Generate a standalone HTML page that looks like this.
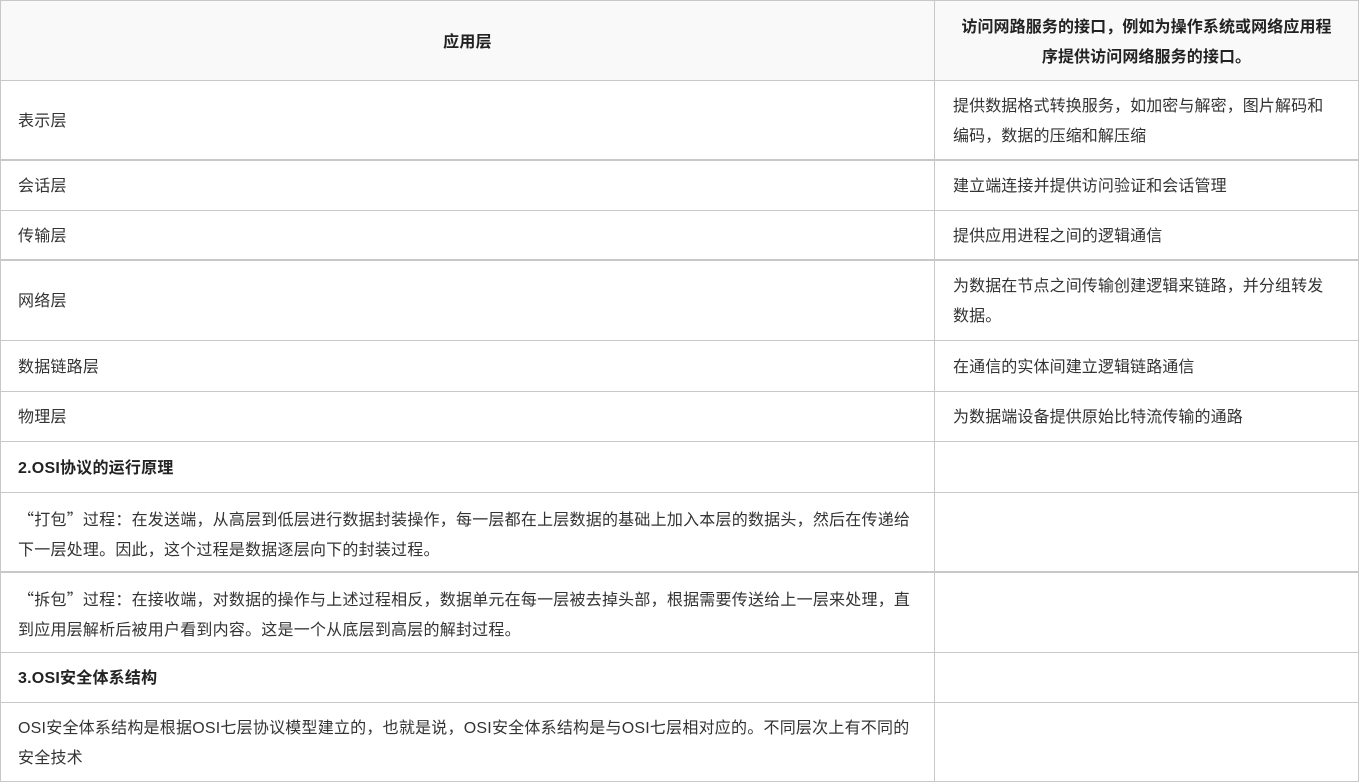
<!DOCTYPE html>
<html><head><meta charset="utf-8"><style>
body{margin:0;width:1360px;height:782px;overflow:hidden;background:#fff;font-family:"Liberation Sans","Noto Sans CJK SC",sans-serif;font-size:16px;color:#333;}
.r{position:absolute;left:0;width:1359px;border-left:1px solid #c8c8c8;border-right:1px solid #c8c8c8;border-top:1px solid #c8c8c8;box-sizing:border-box;}
.r.t{border-top:2px solid #c8c8c8}
.c{position:absolute;top:0;bottom:0;display:flex;align-items:center;line-height:30px;box-sizing:border-box;white-space:nowrap;padding-top:3px!important}
.a{left:0;width:934px;padding:0 17px;border-right:1px solid #c8c8c8;letter-spacing:0.22px}
.b{left:934px;right:0;padding:0 18px;letter-spacing:0.1px}
.h{background:#f9f9f9;font-weight:bold;color:#222}
.h .c{justify-content:center;text-align:center}
b{color:#222}
.q{font-family:"Noto Sans CJK SC",sans-serif}
</style></head><body>
<div class="r h" style="top:0;height:81px"><div class="c a">应用层</div><div class="c b" style="padding:0 10px">访问网路服务的接口，例如为操作系统或网络应用程<br>序提供访问网络服务的接口。</div></div>
<div class="r" style="top:80px;height:80px"><div class="c a">表示层</div><div class="c b">提供数据格式转换服务，如加密与解密，图片解码和<br>编码，数据的压缩和解压缩</div></div>
<div class="r t" style="top:159px;height:51px"><div class="c a">会话层</div><div class="c b">建立端连接并提供访问验证和会话管理</div></div>
<div class="r" style="top:210px;height:50px"><div class="c a">传输层</div><div class="c b">提供应用进程之间的逻辑通信</div></div>
<div class="r t" style="top:259px;height:81px"><div class="c a">网络层</div><div class="c b">为数据在节点之间传输创建逻辑来链路，并分组转发<br>数据。</div></div>
<div class="r" style="top:340px;height:51px"><div class="c a">数据链路层</div><div class="c b">在通信的实体间建立逻辑链路通信</div></div>
<div class="r" style="top:391px;height:50px"><div class="c a">物理层</div><div class="c b">为数据端设备提供原始比特流传输的通路</div></div>
<div class="r" style="top:441px;height:51px"><div class="c a"><b>2.OSI协议的运行原理</b></div><div class="c b"></div></div>
<div class="r" style="top:492px;height:80px"><div class="c a"><span><span class="q">“</span>打包<span class="q">”</span>过程：在发送端，从高层到低层进行数据封装操作，每一层都在上层数据的基础上加入本层的数据头，然后在传递给<br>下一层处理。因此，这个过程是数据逐层向下的封装过程。</span></div><div class="c b"></div></div>
<div class="r t" style="top:571px;height:81px"><div class="c a"><span><span class="q">“</span>拆包<span class="q">”</span>过程：在接收端，对数据的操作与上述过程相反，数据单元在每一层被去掉头部，根据需要传送给上一层来处理，直<br>到应用层解析后被用户看到内容。这是一个从底层到高层的解封过程。</span></div><div class="c b"></div></div>
<div class="r" style="top:652px;height:50px"><div class="c a"><b>3.OSI安全体系结构</b></div><div class="c b"></div></div>
<div class="r" style="top:702px;height:80px;border-bottom:1px solid #c8c8c8"><div class="c a">OSI安全体系结构是根据OSI七层协议模型建立的，也就是说，OSI安全体系结构是与OSI七层相对应的。不同层次上有不同的<br>安全技术</div><div class="c b"></div></div>
</body></html>
